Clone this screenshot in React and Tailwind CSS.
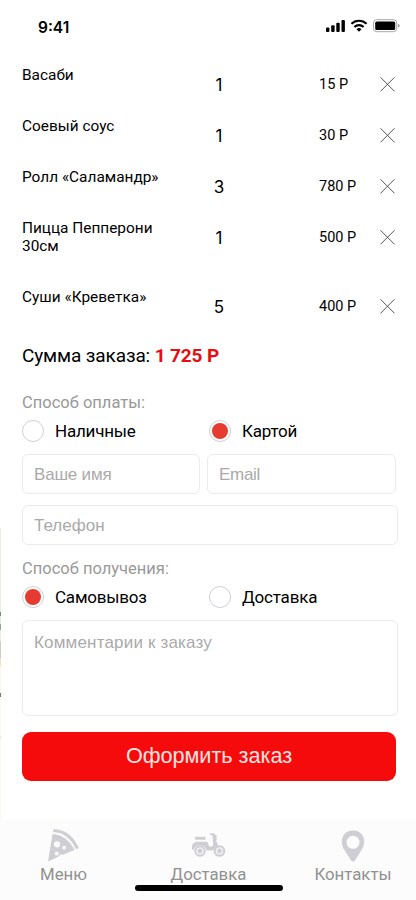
import React from "react";

const items = [
  { name: "Васаби", qty: 1, price: 15, height: "h-[51px]" },
  { name: "Соевый соус", qty: 1, price: 30, height: "h-[51px]" },
  { name: "Ролл «Саламандр»", qty: 3, price: 780, height: "h-[51px]" },
  { name: "Пицца Пепперони 30см", qty: 1, price: 500, height: "h-[69px]" },
  { name: "Суши «Креветка»", qty: 5, price: 400, height: "h-[51px]" },
];

function StatusBar() {
  return (
    <header className="flex h-[65px] items-start justify-between pl-[38px] pr-[16px]">
      <span className="mt-[18px] font-['Inter'] text-[15.5px] leading-[20px] font-semibold">9:41</span>
      <svg className="mt-[18px]" width="74" height="16" viewBox="0 0 74 16">
        <rect x="0" y="9.5" width="3.4" height="4.5" rx="1" />
        <rect x="5.2" y="7.3" width="3.4" height="6.7" rx="1" />
        <rect x="10.3" y="4.8" width="3.4" height="9.2" rx="1" />
        <rect x="15.5" y="2" width="3.4" height="12" rx="1" />
        <g fill="none" stroke="#000" strokeWidth="2.2">
          <path d="M25.4 5.8 A11 11 0 0 1 40.6 5.8" />
          <path d="M28.4 9 A6.6 6.6 0 0 1 37.6 9" />
        </g>
        <path d="M33 13.8 L30.5 11.2 A3.6 3.6 0 0 1 35.5 11.2 Z" />
        <rect x="47.5" y="1.7" width="23.3" height="12" rx="3.4" fill="none" stroke="#a5a5a5" />
        <rect x="49.2" y="3.6" width="20" height="8.4" rx="1.6" />
        <path d="M72 5.8 Q73.8 6.4 73.8 7.7 T72 9.6Z" fill="#a5a5a5" />
      </svg>
    </header>
  );
}

function OrderRow({ item }) {
  return (
    <li className={"flex items-start " + item.height}>
      <span className="mt-px w-[172px] pr-6 text-[15.4px] leading-[18px]">{item.name}</span>
      <span className="mt-[10px] w-[50px] text-center font-['Inter'] text-[17px] leading-[20px]">{item.qty}</span>
      <span className="mt-[11px] ml-[75px] w-[60px] text-[14.5px] leading-[18px]">{item.price} Р</span>
      <svg className="mt-[11px] ml-[1px]" width="16" height="16" viewBox="0 0 16 16" stroke="#555" strokeWidth="1">
        <path d="M.5 1.3 L14.5 15.3 M14.5 1.3 L.5 15.3" />
      </svg>
    </li>
  );
}

function Radio({ label, checked }) {
  return (
    <label className="flex w-[187px] items-center gap-[11px] text-[17px] leading-[22px] tracking-[-0.2px]">
      <span className="flex size-[22px] items-center justify-center rounded-full border border-[#cfcfd6]">
        {checked && <span className="size-4 rounded-full bg-[#e53b30]" />}
      </span>
      {label}
    </label>
  );
}

const field =
  "block rounded-[6px] border border-[#ebebeb] bg-white px-[11px] font-['Liberation_Sans'] text-[17px] placeholder:text-[#aaaaaa] placeholder:opacity-100 resize-none outline-none";

function Pizza() {
  return (
    <svg width="32" height="34" viewBox="0 0 32 34" fill="#cfced4">
      <path d="M5.6 1 C17 1.3 26 8.5 30.8 20 L28 21.3 C23 10.5 15.5 4.4 5 4 Z" />
      <path d="M4.5 6 C14 6.5 21.5 12 26.5 22 L15 26.7 Q12.5 25.5 10.8 28.6 L0 33.5 Z" />
      <g fill="#fcfcfc">
        <circle cx="9" cy="16.3" r="3.1" />
        <circle cx="16.2" cy="19.7" r="1.9" />
        <circle cx="8.7" cy="25.5" r="2" />
      </g>
    </svg>
  );
}

function Scooter() {
  return (
    <svg width="34" height="24" viewBox="0 0 34 24" fill="#cfced4">
      <rect x="3" y="3.8" width="10.5" height="2.9" />
      <path d="M0 16.8 V14.5 C0 11 2.2 8.8 5.5 8.8 H15.5 L17.2 13.4 H19.5 Q21.4 13.4 21.2 11 L20.4 2.2 L18 2 V0.3 H21.5 Q23 0.3 23.2 2 H24.6 V7.2 H24 L26 12.3 L20.8 17.6 H14.5 A6.7 6.7 0 0 0 1.6 16.8 Z" />
      <circle cx="8" cy="18" r="4.8" fill="#f1f1f3" stroke="#cfced4" strokeWidth="1.9" />
      <circle cx="8" cy="18" r="2.3" />
      <circle cx="27.5" cy="18" r="4.8" fill="#f1f1f3" stroke="#cfced4" strokeWidth="2.1" />
      <circle cx="27.5" cy="18" r="2.3" />
    </svg>
  );
}

function Pin() {
  return (
    <svg width="24" height="32" viewBox="0 0 24 32" fill="#cfced4" fillRule="evenodd">
      <path d="M12 .5 C5.4 .5 .8 5.4 .8 11.5 C.8 18.6 6 23.2 9.7 30 Q12 33.4 14.3 30 C18 23.2 23.2 18.6 23.2 11.5 C23.2 5.4 18.6 .5 12 .5 Z M12 5.8 A6.5 6.5 0 1 1 12 18.8 A6.5 6.5 0 1 1 12 5.8 Z" />
    </svg>
  );
}

function Tab({ label, icon, place }) {
  return (
    <a className={"flex flex-col items-center whitespace-nowrap " + place}>
      <span className="flex h-[36px] w-full justify-center">{icon}</span>
      <span className="text-[16.8px] leading-[20px] text-[#919191]">{label}</span>
    </a>
  );
}

export default function App() {
  return (
    <div className="relative flex h-[900px] w-[416px] flex-col overflow-hidden bg-white font-['Roboto',sans-serif] text-black">
      <div className="absolute top-[528px] left-0 h-[292px] w-px bg-[linear-gradient(#e6edda_0_84px,#779177_84px_88px,#e2efd4_88px_96px,#90a986_96px_102px,#e6efdd_102px_113px,#c9cec6_113px_130px,#f4e2c0_130px_138px,#faf8ee_138px_165px,#777777_165px_169px,#fafaf3_169px_208px,#eee8cf_208px_211px,#fafaf3_211px)]" />
      <StatusBar />
      <main className="flex h-[755px] flex-col pl-[22px]">
        <ul>
          {items.map((item) => (
            <OrderRow key={item.name} item={item} />
          ))}
        </ul>
        <p className="mt-[6px] text-[19px] leading-[24px] tracking-[-0.13px]">
          Сумма заказа: <b className="text-[#e60d13]">1 725 Р</b>
        </p>
        <p className="mt-[25px] text-[16.5px] leading-[20px] text-[#999999]">Способ оплаты:</p>
        <div className="mt-[7px] flex">
          <Radio label="Наличные" />
          <Radio label="Картой" checked />
        </div>
        <div className="mt-[12px] flex gap-[7px]">
          <input className={field + " h-[40px] w-[178px] pt-[1px] tracking-[-0.2px]"} placeholder="Ваше имя" />
          <input className={field + " h-[40px] w-[189px] pt-[1px] tracking-[-0.3px]"} placeholder="Email" />
        </div>
        <input className={field + " mt-[11px] h-[40px] w-[376px] pt-[1px]"} placeholder="Телефон" />
        <p className="mt-[14px] text-[16.5px] leading-[20px] text-[#999999]">Способ получения:</p>
        <div className="mt-[7px] flex">
          <Radio label="Самовывоз" checked />
          <Radio label="Доставка" />
        </div>
        <textarea className={field + " mt-[12px] h-[96px] w-[376px] pt-[11px] leading-[22px] tracking-[0.18px]"} placeholder="Комментарии к заказу" />
        <button className="mt-[16px] h-[49px] w-[374px] rounded-[9px] bg-[#f50b0b] font-['Liberation_Sans'] text-[21.6px] text-[#ffe4e2]">
          Оформить заказ
        </button>
      </main>
      <nav className="relative h-[80px] bg-[#fcfcfc]">
        <div className="flex pt-[8px]">
          <Tab label="Меню" icon={<span className="pl-[1px]"><Pizza /></span>} place="w-[127px]" />
          <Tab label="Доставка" icon={<span className="pt-[5px]"><Scooter /></span>} place="w-[163px]" />
          <Tab label="Контакты" icon={<span className="pt-[2px]"><Pin /></span>} place="w-[126px]" />
        </div>
        <div className="absolute top-[65px] left-[135px] h-[6px] w-[148px] rounded-full bg-black" />
      </nav>
    </div>
  );
}
